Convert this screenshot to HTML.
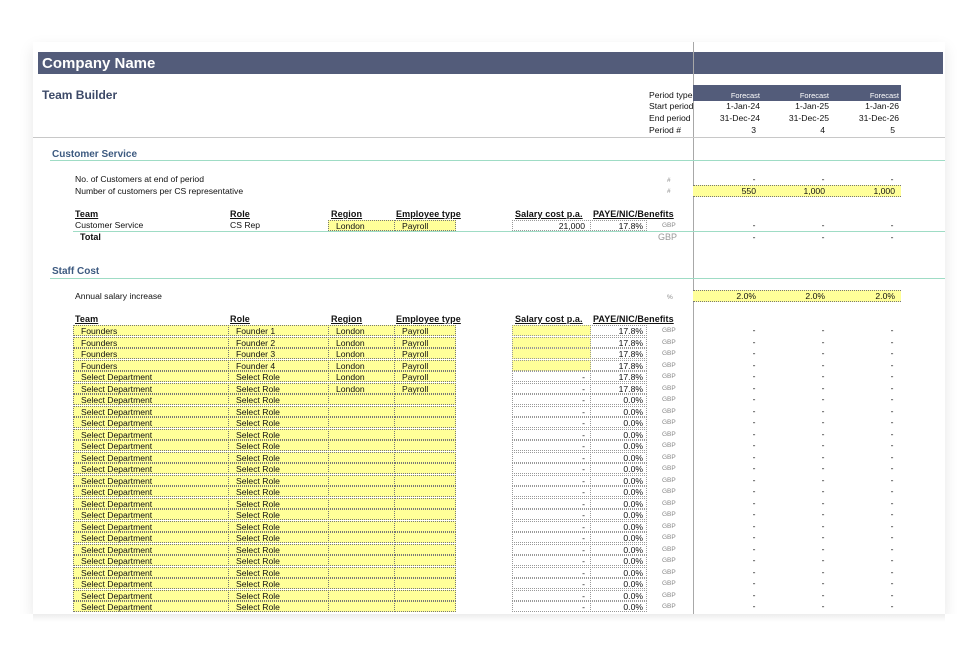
<!DOCTYPE html>
<html><head><meta charset="utf-8"><style>
body{margin:0;width:957px;height:665px;background:#fff;position:relative;overflow:hidden;font-family:"Liberation Sans",Arial,sans-serif;font-size:8.6px;color:#111}
.sheet{position:absolute;left:33px;top:42px;width:912px;height:572px;background:#fff;box-shadow:0 6px 14px rgba(0,0,0,0.10)}
.a{position:absolute;white-space:nowrap;line-height:11px}
.bar{position:absolute;left:38px;top:52px;width:905px;height:22px;background:#535c7a}
.vl{position:absolute;left:693px;top:42px;width:1px;height:572px;background:#a8a8a8}
.hl{position:absolute;height:1px}
.row{position:absolute;left:0;width:957px;height:11.5px}
.row div{position:absolute;top:0;height:11px;line-height:11px;white-space:nowrap;box-sizing:border-box}
.y{background:#ffff99;border:1px dotted #777;padding-left:7px}
.t{left:73px;width:156px}.r{left:228px;width:101px}.g{left:328px;width:67px}.e{left:394px;width:62px}
.s{left:512px;width:79px;border:1px dotted #999;text-align:right;padding-right:5px}
.p{left:590px;width:57px;border:1px dotted #999;text-align:right;padding-right:3px}
.c{left:662px;width:18px;color:#888;font-size:6.5px}
.d{width:20px;text-align:center}
.d1{left:744px}.d2{left:813px}.d3{left:882px}
.hd{font-weight:bold;text-decoration:underline;font-size:9px;letter-spacing:0.1px}
</style></head><body>
<div class="sheet"></div>
<div class="bar"></div>
<div class="a" style="left:42px;top:56px;color:#fff;font-weight:bold;font-size:15px;line-height:16px">Company Name</div>
<div class="a" style="left:42px;top:88px;color:#3d4a68;font-weight:bold;font-size:12px;line-height:14px">Team Builder</div>
<div class="vl"></div>
<div style="position:absolute;left:693px;top:85px;width:208px;height:16px;background:#535c7a"></div>
<div class="a" style="left:649px;top:90px;width:44px;overflow:hidden">Period type</div>
<div class="a" style="left:649px;top:101px;width:44px;overflow:hidden">Start period</div>
<div class="a" style="left:649px;top:113px;width:44px;overflow:hidden">End period</div>
<div class="a" style="left:649px;top:125px">Period #</div>
<div class="a" style="left:693px;top:90px;width:67px;text-align:right;color:#fff;font-size:7.5px">Forecast</div>
<div class="a" style="left:762px;top:90px;width:67px;text-align:right;color:#fff;font-size:7.5px">Forecast</div>
<div class="a" style="left:831px;top:90px;width:68px;text-align:right;color:#fff;font-size:7.5px">Forecast</div>
<div class="a" style="left:693px;top:101px;width:67px;text-align:right">1-Jan-24</div>
<div class="a" style="left:762px;top:101px;width:67px;text-align:right">1-Jan-25</div>
<div class="a" style="left:831px;top:101px;width:68px;text-align:right">1-Jan-26</div>
<div class="a" style="left:693px;top:113px;width:67px;text-align:right">31-Dec-24</div>
<div class="a" style="left:762px;top:113px;width:67px;text-align:right">31-Dec-25</div>
<div class="a" style="left:831px;top:113px;width:68px;text-align:right">31-Dec-26</div>
<div class="a" style="left:693px;top:125px;width:63px;text-align:right">3</div>
<div class="a" style="left:762px;top:125px;width:63px;text-align:right">4</div>
<div class="a" style="left:831px;top:125px;width:64px;text-align:right">5</div>
<div class="hl" style="left:33px;top:137px;width:912px;background:#c8c8c8"></div>

<div class="a" style="left:52px;top:149px;color:#3d5a80;font-weight:bold;font-size:10px">Customer Service</div>
<div class="hl" style="left:50px;top:160px;width:895px;background:#9fdcc5"></div>
<div class="a" style="left:75px;top:174px">No. of Customers at end of period</div>
<div class="a" style="left:75px;top:186px">Number of customers per CS representative</div>
<div class="a" style="left:667px;top:175px;color:#888;font-size:6.5px">#</div>
<div class="a" style="left:667px;top:186px;color:#888;font-size:6.5px">#</div>
<div class="row" style="top:174px"><div class="d d1">-</div><div class="d d2">-</div><div class="d d3">-</div></div>
<div style="position:absolute;left:693px;top:185px;width:208px;height:12px;background:#ffff99;border-top:1px dotted #777;border-bottom:1px dotted #777;box-sizing:border-box"></div>
<div class="a" style="left:693px;top:186px;width:63px;text-align:right">550</div>
<div class="a" style="left:762px;top:186px;width:63px;text-align:right">1,000</div>
<div class="a" style="left:831px;top:186px;width:64px;text-align:right">1,000</div>

<div class="a hd" style="left:75px;top:209px">Team</div>
<div class="a hd" style="left:230px;top:209px">Role</div>
<div class="a hd" style="left:331px;top:209px">Region</div>
<div class="a hd" style="left:396px;top:209px">Employee type</div>
<div class="a hd" style="left:515px;top:209px">Salary cost p.a.</div>
<div class="a hd" style="left:593px;top:209px">PAYE/NIC/Benefits</div>
<div class="row" style="top:220px"><div style="left:75px">Customer Service</div><div style="left:230px">CS Rep</div><div class="y g">London</div><div class="y e">Payroll</div><div class="s">21,000</div><div class="p">17.8%</div><div class="c">GBP</div><div class="d d1">-</div><div class="d d2">-</div><div class="d d3">-</div></div>
<div class="hl" style="left:73px;top:231px;width:872px;background:#9fdcc5"></div>
<div class="a" style="left:80px;top:232px;font-weight:bold;font-size:9px">Total</div>
<div class="a" style="left:658px;top:232px;color:#999;font-size:9px">GBP</div>
<div class="row" style="top:232px"><div class="d d1">-</div><div class="d d2">-</div><div class="d d3">-</div></div>

<div class="a" style="left:52px;top:266px;color:#3d5a80;font-weight:bold;font-size:10px">Staff Cost</div>
<div class="hl" style="left:50px;top:278px;width:895px;background:#9fdcc5"></div>
<div class="a" style="left:75px;top:291px">Annual salary increase</div>
<div class="a" style="left:667px;top:292px;color:#888;font-size:6.5px">%</div>
<div style="position:absolute;left:693px;top:290px;width:208px;height:12px;background:#ffff99;border-top:1px dotted #777;border-bottom:1px dotted #777;box-sizing:border-box"></div>
<div class="a" style="left:693px;top:291px;width:63px;text-align:right">2.0%</div>
<div class="a" style="left:762px;top:291px;width:63px;text-align:right">2.0%</div>
<div class="a" style="left:831px;top:291px;width:64px;text-align:right">2.0%</div>

<div class="a hd" style="left:75px;top:314px">Team</div>
<div class="a hd" style="left:230px;top:314px">Role</div>
<div class="a hd" style="left:331px;top:314px">Region</div>
<div class="a hd" style="left:396px;top:314px">Employee type</div>
<div class="a hd" style="left:515px;top:314px">Salary cost p.a.</div>
<div class="a hd" style="left:593px;top:314px">PAYE/NIC/Benefits</div>

<div class="row" style="top:325px"><div class="y t">Founders</div><div class="y r">Founder 1</div><div class="y g">London</div><div class="y e">Payroll</div><div class="s" style="background:#ffff99"></div><div class="p">17.8%</div><div class="c">GBP</div><div class="d d1">-</div><div class="d d2">-</div><div class="d d3">-</div></div>
<div class="row" style="top:336.5px"><div class="y t">Founders</div><div class="y r">Founder 2</div><div class="y g">London</div><div class="y e">Payroll</div><div class="s" style="background:#ffff99"></div><div class="p">17.8%</div><div class="c">GBP</div><div class="d d1">-</div><div class="d d2">-</div><div class="d d3">-</div></div>
<div class="row" style="top:348px"><div class="y t">Founders</div><div class="y r">Founder 3</div><div class="y g">London</div><div class="y e">Payroll</div><div class="s" style="background:#ffff99"></div><div class="p">17.8%</div><div class="c">GBP</div><div class="d d1">-</div><div class="d d2">-</div><div class="d d3">-</div></div>
<div class="row" style="top:359.5px"><div class="y t">Founders</div><div class="y r">Founder 4</div><div class="y g">London</div><div class="y e">Payroll</div><div class="s" style="background:#ffff99"></div><div class="p">17.8%</div><div class="c">GBP</div><div class="d d1">-</div><div class="d d2">-</div><div class="d d3">-</div></div>
<div class="row" style="top:371px"><div class="y t">Select Department</div><div class="y r">Select Role</div><div class="y g">London</div><div class="y e">Payroll</div><div class="s">-</div><div class="p">17.8%</div><div class="c">GBP</div><div class="d d1">-</div><div class="d d2">-</div><div class="d d3">-</div></div>
<div class="row" style="top:382.5px"><div class="y t">Select Department</div><div class="y r">Select Role</div><div class="y g">London</div><div class="y e">Payroll</div><div class="s">-</div><div class="p">17.8%</div><div class="c">GBP</div><div class="d d1">-</div><div class="d d2">-</div><div class="d d3">-</div></div>
<div class="row" style="top:394px"><div class="y t">Select Department</div><div class="y r">Select Role</div><div class="y g"></div><div class="y e"></div><div class="s">-</div><div class="p">0.0%</div><div class="c">GBP</div><div class="d d1">-</div><div class="d d2">-</div><div class="d d3">-</div></div>
<div class="row" style="top:405.5px"><div class="y t">Select Department</div><div class="y r">Select Role</div><div class="y g"></div><div class="y e"></div><div class="s">-</div><div class="p">0.0%</div><div class="c">GBP</div><div class="d d1">-</div><div class="d d2">-</div><div class="d d3">-</div></div>
<div class="row" style="top:417px"><div class="y t">Select Department</div><div class="y r">Select Role</div><div class="y g"></div><div class="y e"></div><div class="s">-</div><div class="p">0.0%</div><div class="c">GBP</div><div class="d d1">-</div><div class="d d2">-</div><div class="d d3">-</div></div>
<div class="row" style="top:428.5px"><div class="y t">Select Department</div><div class="y r">Select Role</div><div class="y g"></div><div class="y e"></div><div class="s">-</div><div class="p">0.0%</div><div class="c">GBP</div><div class="d d1">-</div><div class="d d2">-</div><div class="d d3">-</div></div>
<div class="row" style="top:440px"><div class="y t">Select Department</div><div class="y r">Select Role</div><div class="y g"></div><div class="y e"></div><div class="s">-</div><div class="p">0.0%</div><div class="c">GBP</div><div class="d d1">-</div><div class="d d2">-</div><div class="d d3">-</div></div>
<div class="row" style="top:451.5px"><div class="y t">Select Department</div><div class="y r">Select Role</div><div class="y g"></div><div class="y e"></div><div class="s">-</div><div class="p">0.0%</div><div class="c">GBP</div><div class="d d1">-</div><div class="d d2">-</div><div class="d d3">-</div></div>
<div class="row" style="top:463px"><div class="y t">Select Department</div><div class="y r">Select Role</div><div class="y g"></div><div class="y e"></div><div class="s">-</div><div class="p">0.0%</div><div class="c">GBP</div><div class="d d1">-</div><div class="d d2">-</div><div class="d d3">-</div></div>
<div class="row" style="top:474.5px"><div class="y t">Select Department</div><div class="y r">Select Role</div><div class="y g"></div><div class="y e"></div><div class="s">-</div><div class="p">0.0%</div><div class="c">GBP</div><div class="d d1">-</div><div class="d d2">-</div><div class="d d3">-</div></div>
<div class="row" style="top:486px"><div class="y t">Select Department</div><div class="y r">Select Role</div><div class="y g"></div><div class="y e"></div><div class="s">-</div><div class="p">0.0%</div><div class="c">GBP</div><div class="d d1">-</div><div class="d d2">-</div><div class="d d3">-</div></div>
<div class="row" style="top:497.5px"><div class="y t">Select Department</div><div class="y r">Select Role</div><div class="y g"></div><div class="y e"></div><div class="s">-</div><div class="p">0.0%</div><div class="c">GBP</div><div class="d d1">-</div><div class="d d2">-</div><div class="d d3">-</div></div>
<div class="row" style="top:509px"><div class="y t">Select Department</div><div class="y r">Select Role</div><div class="y g"></div><div class="y e"></div><div class="s">-</div><div class="p">0.0%</div><div class="c">GBP</div><div class="d d1">-</div><div class="d d2">-</div><div class="d d3">-</div></div>
<div class="row" style="top:520.5px"><div class="y t">Select Department</div><div class="y r">Select Role</div><div class="y g"></div><div class="y e"></div><div class="s">-</div><div class="p">0.0%</div><div class="c">GBP</div><div class="d d1">-</div><div class="d d2">-</div><div class="d d3">-</div></div>
<div class="row" style="top:532px"><div class="y t">Select Department</div><div class="y r">Select Role</div><div class="y g"></div><div class="y e"></div><div class="s">-</div><div class="p">0.0%</div><div class="c">GBP</div><div class="d d1">-</div><div class="d d2">-</div><div class="d d3">-</div></div>
<div class="row" style="top:543.5px"><div class="y t">Select Department</div><div class="y r">Select Role</div><div class="y g"></div><div class="y e"></div><div class="s">-</div><div class="p">0.0%</div><div class="c">GBP</div><div class="d d1">-</div><div class="d d2">-</div><div class="d d3">-</div></div>
<div class="row" style="top:555px"><div class="y t">Select Department</div><div class="y r">Select Role</div><div class="y g"></div><div class="y e"></div><div class="s">-</div><div class="p">0.0%</div><div class="c">GBP</div><div class="d d1">-</div><div class="d d2">-</div><div class="d d3">-</div></div>
<div class="row" style="top:566.5px"><div class="y t">Select Department</div><div class="y r">Select Role</div><div class="y g"></div><div class="y e"></div><div class="s">-</div><div class="p">0.0%</div><div class="c">GBP</div><div class="d d1">-</div><div class="d d2">-</div><div class="d d3">-</div></div>
<div class="row" style="top:578px"><div class="y t">Select Department</div><div class="y r">Select Role</div><div class="y g"></div><div class="y e"></div><div class="s">-</div><div class="p">0.0%</div><div class="c">GBP</div><div class="d d1">-</div><div class="d d2">-</div><div class="d d3">-</div></div>
<div class="row" style="top:589.5px"><div class="y t">Select Department</div><div class="y r">Select Role</div><div class="y g"></div><div class="y e"></div><div class="s">-</div><div class="p">0.0%</div><div class="c">GBP</div><div class="d d1">-</div><div class="d d2">-</div><div class="d d3">-</div></div>
<div class="row" style="top:601px"><div class="y t">Select Department</div><div class="y r">Select Role</div><div class="y g"></div><div class="y e"></div><div class="s">-</div><div class="p">0.0%</div><div class="c">GBP</div><div class="d d1">-</div><div class="d d2">-</div><div class="d d3">-</div></div>
<div style="position:absolute;left:0;top:614px;width:957px;height:51px;background:#fff"></div>
<div style="position:absolute;left:33px;top:614px;width:912px;height:8px;background:linear-gradient(rgba(0,0,0,0.07),rgba(0,0,0,0))"></div>
</body></html>
